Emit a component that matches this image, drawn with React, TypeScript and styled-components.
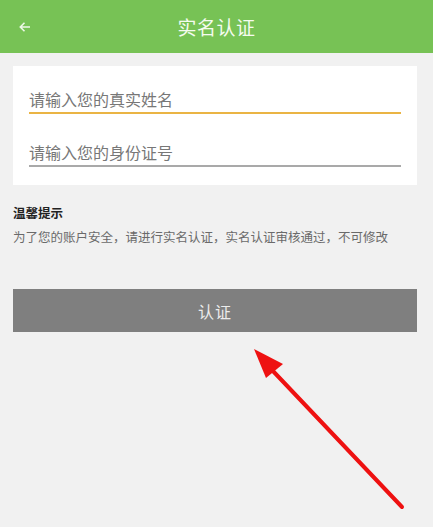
import styled, { createGlobalStyle } from 'styled-components';

const GlobalStyle = createGlobalStyle`
  html, body {
    margin: 0;
    padding: 0;
    background: #f1f1f1;
  }
  body {
    font-family: "Noto Sans CJK SC", "Liberation Sans", sans-serif;
  }
`;

const Page = styled.div`
  position: relative;
  width: 433px;
  height: 527px;
  overflow: hidden;
  background: #f1f1f1;
`;

const Header = styled.header`
  height: 53px;
  background: #77c255;
  display: flex;
  align-items: center;
  position: relative;
`;

const BackBtn = styled.button`
  border: none;
  background: none;
  padding: 0;
  margin-left: 18px;
  width: 14px;
  height: 14px;
  display: flex;
  align-items: center;
  cursor: pointer;
`;

const Title = styled.h1`
  position: absolute;
  left: 0;
  right: 0;
  top: 0;
  bottom: 0;
  margin: 0;
  display: flex;
  align-items: center;
  justify-content: center;
  font-size: 19px;
  font-weight: 400;
  color: #f4fbef;
  letter-spacing: 0.5px;
  pointer-events: none;
`;

const Card = styled.div`
  margin: 13px 16px 0 13px;
  background: #fff;
  padding: 12px 16px 18px 16px;
  display: flex;
  flex-direction: column;
  gap: 17px;
`;

const Field = styled.div<{ $active?: boolean }>`
  box-sizing: border-box;
  height: 36px;
  display: flex;
  align-items: flex-end;
  border-bottom: 2px solid ${(p) => (p.$active ? '#eab444' : '#a9a9a9')};
`;

const Input = styled.input`
  border: none;
  outline: none;
  background: transparent;
  width: 100%;
  padding: 0 0 2px 0;
  font-family: inherit;
  font-size: 16px;
  line-height: 22px;
  color: #333;
  &::placeholder {
    color: #777;
  }
`;

const Tips = styled.section`
  padding: 19px 13px 0;
`;

const TipsTitle = styled.h2`
  margin: 0;
  font-size: 12.5px;
  font-weight: 700;
  color: #222;
  line-height: 18px;
`;

const TipsText = styled.p`
  margin: 6px 0 0;
  font-size: 12.5px;
  color: #6a6a6a;
  line-height: 18px;
  white-space: nowrap;
`;

const SubmitBtn = styled.button`
  display: block;
  margin: 43px 16px 0 13px;
  width: calc(100% - 29px);
  height: 43px;
  border: none;
  background: #7f7f7f;
  color: #ececec;
  font-family: inherit;
  font-size: 16px;
  letter-spacing: 1px;
  cursor: pointer;
`;

const Annotation = styled.svg`
  position: absolute;
  left: 0;
  top: 0;
  pointer-events: none;
`;

export default function App() {
  return (
    <>
      <GlobalStyle />
      <Page>
        <Header>
          <BackBtn aria-label="返回">
            <svg width="14" height="14" viewBox="0 0 14 14">
              <path d="M12 7H2.5M6.5 2.8L2.3 7l4.2 4.2" fill="none" stroke="#eef8e8" strokeWidth="1.6" />
            </svg>
          </BackBtn>
          <Title>实名认证</Title>
        </Header>
        <Card>
          <Field $active>
            <Input placeholder="请输入您的真实姓名" />
          </Field>
          <Field>
            <Input placeholder="请输入您的身份证号" />
          </Field>
        </Card>
        <Tips>
          <TipsTitle>温馨提示</TipsTitle>
          <TipsText>为了您的账户安全，请进行实名认证，实名认证审核通过，不可修改</TipsText>
        </Tips>
        <SubmitBtn>认证</SubmitBtn>
        <Annotation width="433" height="527" viewBox="0 0 433 527">
          <line x1="402" y1="507" x2="272" y2="370" stroke="#ee1111" strokeWidth="4" strokeLinecap="round" />
          <polygon points="254,349 283,364 266,378" fill="#ee1111" />
        </Annotation>
      </Page>
    </>
  );
}
